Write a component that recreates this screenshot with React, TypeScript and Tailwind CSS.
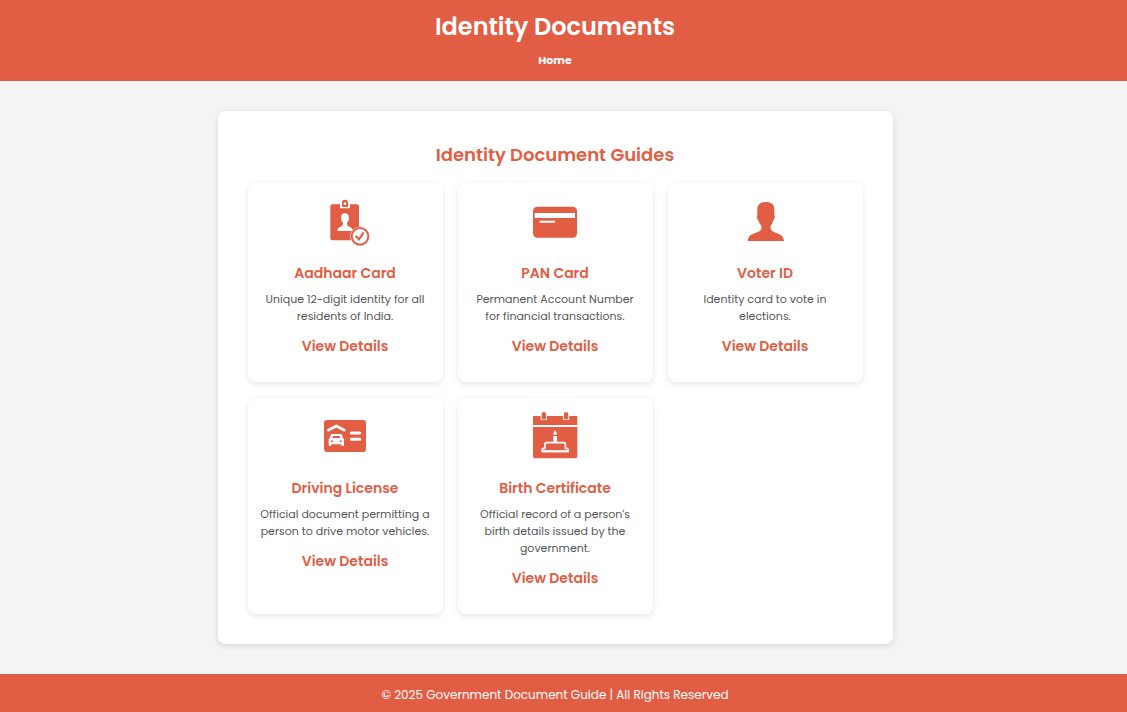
import type { ReactNode } from "react";

const BRAND = "#e15d44";

function AadhaarIcon() {
  return (
    <svg viewBox="0 9 150 150" className="size-[50px]" fill={BRAND} aria-hidden="true">
      <path d="M37 28H60V40H90V28H111Q117 28 117 34V98A28 28 0 0 0 93 136H37Q31 136 31 130V34Q31 28 37 28Z" />
      <path fillRule="evenodd" d="M66 36V23A9 9 0 0 1 84 23V36ZM75 22A4 4 0 1 0 75 30A4 4 0 1 0 75 22Z" />
      <path fill="#fff" d="M75 55C83 55 87 60 87 67C87 75 85 80 81 84C81 91 83 93 88 95C95 98 98 101 98 108H52C52 101 55 98 62 95C67 93 69 91 69 84C65 80 63 75 63 67C63 60 67 55 75 55Z" />
      <circle cx="120" cy="124" r="29" fill="#fff" />
      <circle cx="120" cy="124" r="25" fill="#fff" stroke={BRAND} strokeWidth="6" />
      <path d="M107 123L117 133L131 112" fill="none" stroke={BRAND} strokeWidth="6" />
    </svg>
  );
}

function PanIcon() {
  return (
    <svg viewBox="15 9 150 150" className="size-[50px]" fill={BRAND} aria-hidden="true">
      <rect x="24" y="35" width="132" height="93" rx="13" />
      <path fill="#fff" d="M29 54H150V69H29ZM44 77H90V83H44Z" />
    </svg>
  );
}

function VoterIcon() {
  return (
    <svg viewBox="15 9 150 150" className="size-[50px]" fill={BRAND} aria-hidden="true">
      <path d="M92 21C109 21 118 28 118 43V60C121 63 119 73 115 76C113 84 110 88 107 92V102C109 109 120 112 130 116C142 121 146 127 147 138H38C39 127 43 121 55 116C65 112 77 109 79 102V92C75 88 72 84 70 76C66 73 64 63 67 60V43C67 30 76 21 92 21Z" />
    </svg>
  );
}

function DrivingIcon() {
  return (
    <svg viewBox="15 15 150 150" className="size-[50px]" fill={BRAND} aria-hidden="true">
      <rect x="27" y="36" width="126" height="96" rx="10" />
      <path d="M41 66L64 54L87 66" fill="none" stroke="#fff" strokeWidth="9" strokeLinecap="round" strokeLinejoin="round" />
      <path d="M109 75H134M109 94H134" stroke="#fff" strokeWidth="9" strokeLinecap="round" />
      <path
        fill="#fff"
        fillRule="evenodd"
        d="M51 78H77Q80 78 81 81L84 90Q87 92 87 96V110Q87 114 83 114Q78 114 78 109H50Q50 114 45 114Q41 114 41 110V96Q41 92 44 90L47 81Q48 78 51 78ZM54 84L52 90H76L74 84ZM51 97A3 3 0 1 0 51 103A3 3 0 1 0 51 97ZM77 97A3 3 0 1 0 77 103A3 3 0 1 0 77 97Z"
      />
    </svg>
  );
}

function BirthIcon() {
  return (
    <svg viewBox="15 15 150 150" className="size-[50px] overflow-visible" fill={BRAND} aria-hidden="true">
      <path d="M24 24H47V36H66V24H114V36H133V24H157V51H24ZM24 57H157V145Q157 151 151 151H30Q24 151 24 145Z" />
      <path d="M50 18Q50 12 56 12Q63 12 63 18V34H50ZM117 18Q117 12 123 12Q130 12 130 18V34H117Z" />
      <path d="M52 130V124Q52 121 56 121H60V108Q60 104 64 104H117Q121 104 121 108V121H125Q129 121 129 124V130Z" fill="none" stroke="#fff" strokeWidth="5" />
      <path d="M63 117H118V127H63Z" fill={BRAND} />
      <path fill="#fff" d="M50 127H131V133H50ZM85 84H96V103H85ZM90 67C97 75 97 81 90 81C84 81 84 75 90 67Z" />
    </svg>
  );
}

type Guide = { title: string; text: string; icon: ReactNode };

const guides: Guide[] = [
  { title: "Aadhaar Card", text: "Unique 12-digit identity for all residents of India.", icon: <AadhaarIcon /> },
  { title: "PAN Card", text: "Permanent Account Number for financial transactions.", icon: <PanIcon /> },
  { title: "Voter ID", text: "Identity card to vote in elections.", icon: <VoterIcon /> },
  { title: "Driving License", text: "Official document permitting a person to drive motor vehicles.", icon: <DrivingIcon /> },
  { title: "Birth Certificate", text: "Official record of a person's birth details issued by the government.", icon: <BirthIcon /> },
];

function GuideCard({ title, text, icon }: Guide) {
  return (
    <article className="flex flex-col items-center rounded-lg bg-white px-3 pt-[15px] pb-[25px] text-center shadow-[0_2px_6px_rgba(0,0,0,0.1)]">
      {icon}
      <h3 className="mt-[14px] text-sm leading-[22px] font-semibold text-[#e15d44]">{title}</h3>
      <p className="mt-[7px] text-[11px] leading-[17px] text-[#555]">{text}</p>
      <a href="#details" className="mt-[10px] text-sm leading-[22px] font-semibold text-[#e15d44]">
        View Details
      </a>
    </article>
  );
}

export default function App() {
  return (
    <div className="flex min-h-screen flex-col bg-[#f4f4f4] font-[Poppins,Inter,sans-serif]">
      <header className="bg-[#e15d44] pt-[7px] pr-[17px] pb-3 text-center text-white">
        <h1 className="text-2xl leading-10 font-semibold">Identity Documents</h1>
        <nav className="mt-1 text-[11px] leading-[18px] font-bold">
          <a href="#home">Home</a>
        </nav>
      </header>
      <main className="flex-1 py-[30px] pr-[17px]">
        <section className="mx-auto max-w-[675px] rounded-lg bg-white p-[30px] shadow-[0_2px_6px_rgba(0,0,0,0.12)]">
          <h2 className="mb-[15px] text-center text-lg leading-[27px] font-semibold text-[#e15d44]">
            Identity Document Guides
          </h2>
          <div className="grid grid-cols-1 gap-x-[15px] gap-y-4 sm:grid-cols-3">
            {guides.map((guide) => (
              <GuideCard key={guide.title} {...guide} />
            ))}
          </div>
        </section>
      </main>
      <footer className="bg-[#e15d44] pt-3 pr-[17px] pb-2 text-center text-xs leading-[18px] text-white">
        <p>© 2025 Government Document Guide | All Rights Reserved</p>
      </footer>
    </div>
  );
}
